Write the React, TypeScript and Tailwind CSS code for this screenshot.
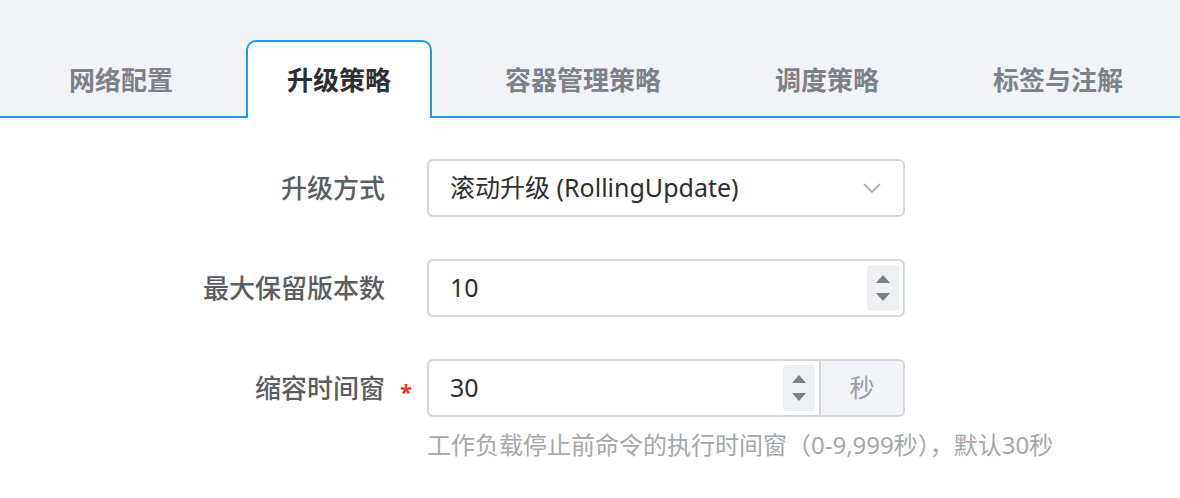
import React, { useState } from 'react';

const tabs = ['网络配置', '升级策略', '容器管理策略', '调度策略', '标签与注解'];

const Spinner: React.FC = () => (
  <div className="w-[32px] h-[46px] rounded-[4px] bg-[#eef0f4] flex flex-col items-center justify-center gap-[10px]">
    <svg width="14" height="8" viewBox="0 0 14 8">
      <path d="M7 0 L14 8 L0 8 Z" fill="#7b8089" />
    </svg>
    <svg width="14" height="8" viewBox="0 0 14 8">
      <path d="M0 0 L14 0 L7 8 Z" fill="#7b8089" />
    </svg>
  </div>
);

const FormRow: React.FC<{ label: string; required?: boolean; children: React.ReactNode }> = ({
  label,
  required,
  children,
}) => (
  <div className="flex items-start">
    <div className="w-[385px] h-[58px] flex items-center justify-end text-[26px] font-medium text-[#595d64]">
      {label}
    </div>
    <div className="w-[42px] h-[58px] flex items-center justify-center">
      {required && <span className="text-[22px] text-[#e5322d] font-bold mt-[6px]">*</span>}
    </div>
    <div className="flex flex-col">{children}</div>
  </div>
);

export default function App() {
  const [active, setActive] = useState(1);

  return (
    <div
      className="w-[1180px] h-[498px] bg-white overflow-hidden"
      style={{ fontFamily: '"Noto Sans", "Noto Sans CJK SC", sans-serif' }}
    >
      {/* Tabs */}
      <div className="h-[118px] bg-[#f1f3f6] border-b-2 border-[#1f9ae8] flex items-end px-[28px] gap-[32px]">
        {tabs.map((t, i) => (
          <button
            key={t}
            onClick={() => setActive(i)}
            className={`h-[78px] -mb-[2px] px-[39px] shrink-0 whitespace-nowrap flex items-center justify-center text-[26px] rounded-t-[10px] ${
              i === active
                ? 'bg-white border-2 border-b-0 border-[#1f9ae8] text-[#2c2e33] font-bold'
                : 'text-[#7d8189] font-semibold border-2 border-transparent border-b-0'
            }`}
          >
            {t}
          </button>
        ))}
      </div>

      {/* Form */}
      <div className="pt-[41px] flex flex-col gap-[42px]">
        <FormRow label="升级方式">
          <div className="w-[478px] h-[58px] border-2 border-[#d3d6dd] rounded-[6px] flex items-center justify-between pl-[21px] pr-[22px] text-[25px] text-[#2c2e33]">
            <span>滚动升级 (RollingUpdate)</span>
            <svg width="18" height="10" viewBox="0 0 18 10" fill="none">
              <path d="M1 1 L9 9 L17 1" stroke="#9ea2a9" strokeWidth="1.6" />
            </svg>
          </div>
        </FormRow>

        <FormRow label="最大保留版本数">
          <div className="w-[478px] h-[58px] border-2 border-[#d3d6dd] rounded-[6px] flex items-center justify-between pl-[21px] pr-[4px] text-[25px] text-[#2c2e33]">
            <span>10</span>
            <Spinner />
          </div>
        </FormRow>

        <FormRow label="缩容时间窗" required>
          <div className="w-[478px] h-[58px] border-2 border-[#d3d6dd] rounded-[6px] flex items-stretch text-[25px] text-[#2c2e33] overflow-hidden">
            <div className="flex-1 flex items-center justify-between pl-[21px] pr-[4px]">
              <span>30</span>
              <Spinner />
            </div>
            <div className="w-[84px] border-l-2 border-[#d3d6dd] bg-[#f1f3f6] flex items-center justify-center text-[#9a9ea5]">
              秒
            </div>
          </div>
          <div className="mt-[10px] text-[24px] text-[#a3a7ae] whitespace-nowrap">
            工作负载停止前命令的执行时间窗（0-9,999秒），默认30秒
          </div>
        </FormRow>
      </div>
    </div>
  );
}
